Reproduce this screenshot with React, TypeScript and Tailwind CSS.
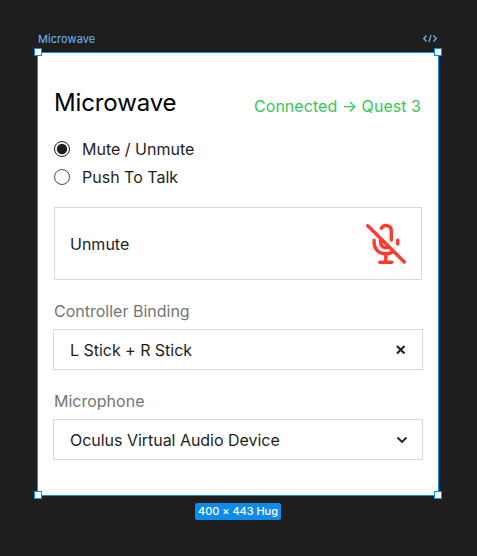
import type { ReactNode } from "react";

function Handle({ className }: { className: string }) {
  return <span className={`absolute size-2 border border-[#0d8ceb] bg-white ${className}`} />;
}

function Radio({ checked, label }: { checked?: boolean; label: string }) {
  return (
    <div className="flex h-7 items-center gap-3">
      <svg className="size-4" viewBox="0 0 16 16" fill="none">
        <circle cx="8" cy="8" r="7.5" stroke="#1e1e1e" strokeWidth={checked ? 1 : 0.8} />
        {checked && <circle cx="8" cy="8" r="5.2" fill="#1e1e1e" />}
      </svg>
      <span>{label}</span>
    </div>
  );
}

function Field({ label, value, children }: { label: string; value: string; children: ReactNode }) {
  return (
    <div className="h-[90px]">
      <div className="h-[29px] pt-px pl-px leading-5 text-[#757575]">{label}</div>
      <div className="flex h-[41px] items-center justify-between border border-[#d9d9d9] pr-[13px] pl-4">
        <span className="tracking-[-0.03px]">{value}</span>
        {children}
      </div>
    </div>
  );
}

export default function App() {
  return (
    <div className="h-[556px] w-[477px] overflow-hidden bg-[#1e1e1e] pt-8 pl-[37px] font-['Inter',sans-serif]">
      <div className="flex h-5 w-[402px] items-start justify-between pl-px text-[11px] leading-[14px] text-[#74b9ec]">
        <span className="tracking-[0.07px]">Microwave</span>
        <svg className="mr-px h-[14px] w-4" viewBox="0 0 16 14" fill="none" stroke="currentColor" strokeWidth="1.2">
          <path d="M4.5 3.5 1.7 6.5l2.8 3M11.5 3.5l2.8 3-2.8 3M9 3 7 10" />
        </svg>
      </div>
      <main className="relative h-[444px] w-[402px] border border-[#0d8ceb] bg-white px-[15px] pt-[35px] text-base leading-5 text-[#1e1e1e]">
        <header className="flex h-[47px] items-start justify-between pr-0.5 pl-px">
          <h1 className="text-2xl leading-[30px] tracking-[-0.12px] text-black">Microwave</h1>
          <span className="pt-2 tracking-[0.04px] text-[#34c759]">Connected → Quest 3</span>
        </header>
        <div className="h-[72px] pl-px">
          <Radio checked label="Mute / Unmute" />
          <Radio label="Push To Talk" />
        </div>
        <div className="mb-5 ml-px flex h-[73px] w-[368px] items-center justify-between border border-[#d9d9d9] pr-[15px] pl-[15px]">
          <span>Unmute</span>
          <svg className="size-10 overflow-visible" viewBox="0 0 40 40" fill="none" stroke="#ff3b30" strokeWidth="3.4" strokeLinecap="round">
            <path d="M1.8 1.8 38.3 38M15.4 4.2A5.3 5.3 0 0 1 25.3 6.7V16M14.7 15.2v3.3a5.3 5.3 0 0 0 7.8 4.6M8.1 16.3v2.2c0 7 5 11.3 11.4 11.3 3.2 0 5.7-.9 7.7-2.3M31.7 16.3v3.7M19.8 30.5v7M13.8 38.3h12" />
          </svg>
        </div>
        <div className="w-[370px]">
          <Field label="Controller Binding" value="L Stick + R Stick">
            <svg className="size-4" viewBox="0 0 16 16" stroke="#1e1e1e" strokeWidth="2">
              <path d="m4 4 7.5 7.5M11.5 4 4 11.5" />
            </svg>
          </Field>
          <Field label="Microphone" value="Oculus Virtual Audio Device">
            <svg className="size-4" viewBox="0 0 16 16" fill="none" stroke="#1e1e1e" strokeWidth="1.8">
              <path d="m4.5 5.5 4.5 4.5 4.5-4.5" />
            </svg>
          </Field>
        </div>
        <Handle className="-top-[5px] -left-1" />
        <Handle className="-top-[5px] -right-1" />
        <Handle className="-bottom-1 -left-1" />
        <Handle className="-right-1 -bottom-1" />
      </main>
      <div className="mt-[7px] ml-[158px] flex h-[17px] w-[86px] items-center justify-center rounded-[2px] bg-[#0d8ceb] text-[11px] font-medium whitespace-nowrap text-white">
        <span className="tracking-[-0.05px]">400 × 443 Hug</span>
      </div>
    </div>
  );
}
